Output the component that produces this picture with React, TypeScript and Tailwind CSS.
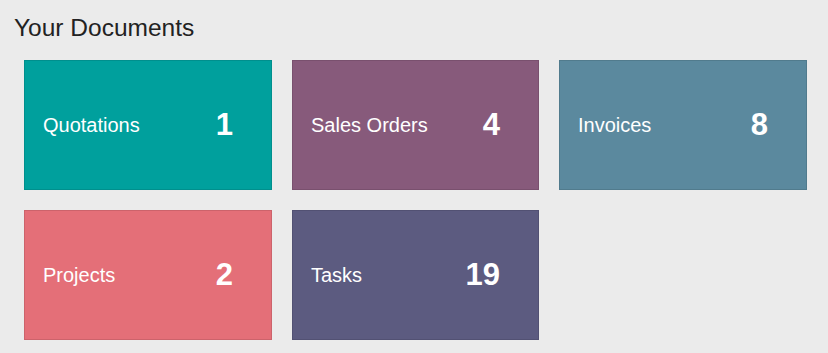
import React from "react";

const cards = [
  { label: "Quotations", count: 1, bg: "bg-[#00A09D]" },
  { label: "Sales Orders", count: 4, bg: "bg-[#875A7B]" },
  { label: "Invoices", count: 8, bg: "bg-[#5B899E]" },
  { label: "Projects", count: 2, bg: "bg-[#E46F78]" },
  { label: "Tasks", count: 19, bg: "bg-[#5C5B80]" },
];

export default function App() {
  return (
    <div
      className="w-[828px] h-[353px] bg-[#EBEBEB] overflow-hidden"
      style={{ fontFamily: '"Liberation Sans", Arial, sans-serif' }}
    >
      <h1 className="pl-[14px] pt-[14px] text-[24.5px] leading-[28px] text-[#222222] font-normal">
        Your Documents
      </h1>
      <div className="mt-[18px] ml-[24px] grid grid-cols-[248px_247px_248px] gap-x-[20px] gap-y-[20px]">
        {cards.map((c) => (
          <div
            key={c.label}
            className={`${c.bg} h-[130px] flex items-center justify-between pl-[18px] pr-[38px] border border-black/10 text-white`}
          >
            <span className="text-[20px]">{c.label}</span>
            <span className="text-[31px] font-bold">{c.count}</span>
          </div>
        ))}
      </div>
    </div>
  );
}
